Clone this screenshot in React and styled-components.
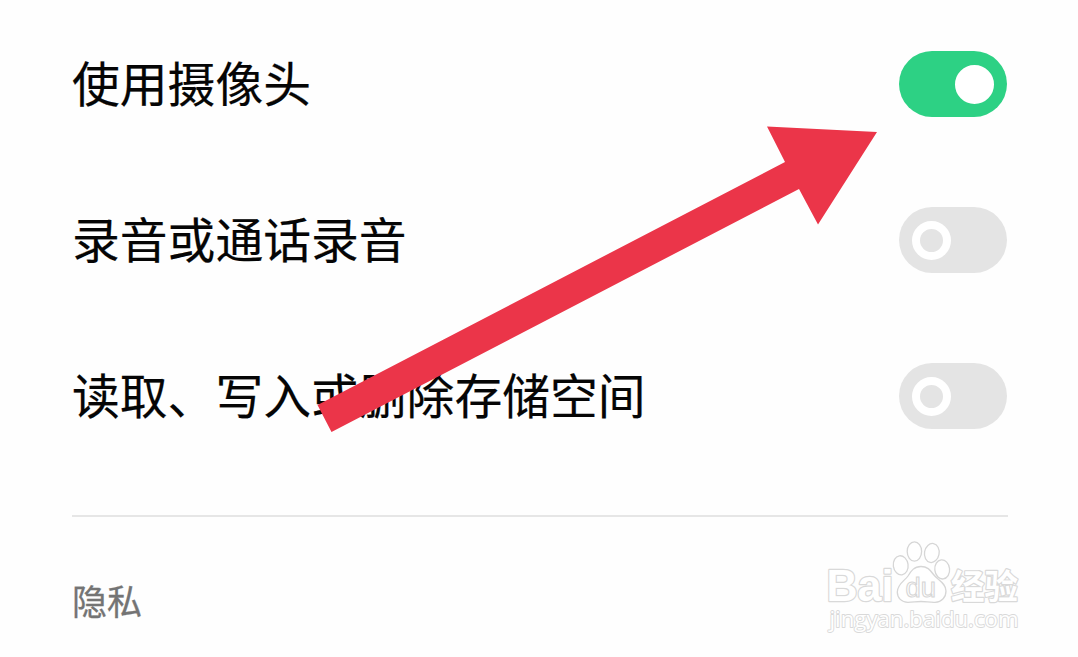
import React from 'react';
import styled, { createGlobalStyle } from 'styled-components';

const GlobalStyle = createGlobalStyle`
  * { box-sizing: border-box; }
  body {
    margin: 0;
    background: #fefefe;
    font-family: "Noto Sans CJK SC", sans-serif;
  }
`;

const Page = styled.main`
  position: relative;
  width: 1078px;
  height: 657px;
  padding: 6px 70px 0 72px;
  overflow: hidden;
`;

const Row = styled.div`
  display: flex;
  align-items: center;
  justify-content: space-between;
  height: 156px;
  padding-right: 1px;
`;

const Label = styled.span`
  padding-bottom: 4px;
  font-size: 47.8px;
  line-height: 70px;
  font-weight: 400;
  color: #050505;
  -webkit-text-stroke: 0.2px #050505;
  white-space: nowrap;
`;

const Track = styled.button`
  display: flex;
  align-items: center;
  justify-content: ${(p) => (p.$on ? 'flex-end' : 'flex-start')};
  width: 108px;
  height: 66px;
  padding: 0 13px;
  border: 0;
  border-radius: 33px;
  background: ${(p) => (p.$on ? '#2dd184' : '#e4e4e4')};
`;

const Knob = styled.span`
  width: 39px;
  height: 39px;
  border-radius: 50%;
  border: 8px solid #fff;
  background: ${(p) => (p.$on ? '#fff' : 'transparent')};
`;

const Divider = styled.hr`
  height: 2px;
  margin: 41px 0 0;
  border: 0;
  background: #e6e6e6;
`;

const SectionTitle = styled.h2`
  margin: 57px 0 0;
  font-size: 35px;
  line-height: 52px;
  font-weight: 400;
  color: #747474;
  -webkit-text-stroke: 0.3px #747474;
`;

const Arrow = styled.svg`
  position: absolute;
  left: 0;
  top: 0;
  pointer-events: none;
`;

const Watermark = styled.svg`
  position: absolute;
  left: 820px;
  top: 535px;
  pointer-events: none;
`;

const permissions = [
  { label: '使用摄像头', on: true },
  { label: '录音或通话录音', on: false },
  { label: '读取、写入或删除存储空间', on: false },
];

function Switch({ on, label }) {
  return (
    <Track type="button" role="switch" aria-checked={on} aria-label={label} $on={on}>
      <Knob $on={on} />
    </Track>
  );
}

export default function App() {
  return (
    <>
      <GlobalStyle />
      <Page>
        {permissions.map(({ label, on }) => (
          <Row key={label}>
            <Label>{label}</Label>
            <Switch on={on} label={label} />
          </Row>
        ))}
        <Divider />
        <SectionTitle>隐私</SectionTitle>
        <Arrow width="1078" height="657" viewBox="0 0 1078 657">
          <path d="M317.5 405 785 162 767 126.5 877 132 818 224.5 799 189 331.5 432Z" fill="#eb3549" />
        </Arrow>
        <Watermark width="210" height="105" viewBox="820 535 210 105">
          <g fill="#fff" stroke="#d9d9d9" strokeWidth="2.4" strokeLinejoin="round" paintOrder="stroke">
            <text x="826.5" y="601" fontFamily="Liberation Sans, sans-serif" fontWeight="700" fontSize="43.5" textLength="67" lengthAdjust="spacingAndGlyphs">Bai</text>
            <text x="951" y="598.5" fontFamily="Noto Sans CJK SC, sans-serif" fontWeight="700" fontSize="34" textLength="67" lengthAdjust="spacingAndGlyphs">经验</text>
            <text x="829.5" y="627" fontFamily="Open Sans, sans-serif" fontSize="21.5" textLength="189" lengthAdjust="spacingAndGlyphs" strokeWidth="1.8">jingyan.baidu.com</text>
          </g>
          <g fill="#fff" stroke="#d6d6d6" strokeWidth="1.3">
            <ellipse cx="900.7" cy="565.3" rx="7.4" ry="9.6" transform="rotate(-8 900.7 565.3)" />
            <ellipse cx="914.4" cy="551.5" rx="7.2" ry="9.6" />
            <ellipse cx="931.8" cy="553" rx="7.3" ry="9.6" transform="rotate(10 931.8 553)" />
            <ellipse cx="942.2" cy="569.4" rx="7.4" ry="9.6" transform="rotate(-6 942.2 569.4)" />
            <path d="M921 566.5C914 566.5 911 571 908 576C905 580.5 897.3 584 897.3 592C897.3 598 901.5 602.3 908 602.3C913 602.3 916 601.5 921 601.5C926 601.5 930 602.5 935 602.3C942 602 946 597 946 591C946 583 937.5 580 933.5 574.5C930 569.5 927 566.5 921 566.5Z" />
            <text x="905.5" y="596.5" fontFamily="Liberation Sans, sans-serif" fontSize="27" textLength="30.5" lengthAdjust="spacingAndGlyphs" strokeWidth="1.1">du</text>
          </g>
        </Watermark>
      </Page>
    </>
  );
}
